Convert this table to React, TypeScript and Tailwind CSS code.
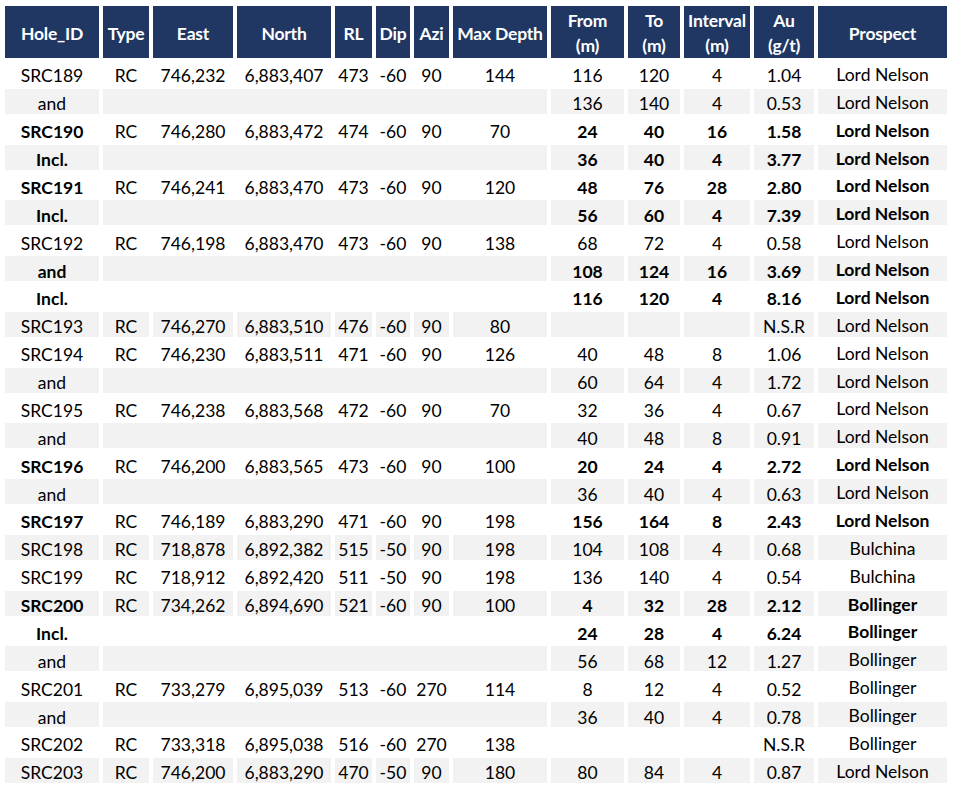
import React from 'react';

type Row = {
    hole: string;
    type?: string;
    east?: string;
    north?: string;
    rl?: string;
    dip?: string;
    azi?: string;
    depth?: string;
    from: string;
    to: string;
    interval: string;
    au: string;
    prospect: string;
    boldHole?: boolean;
    boldRes?: boolean;
};

const ROWS: Row[] = [
    { hole: 'SRC189', type: 'RC', east: '746,232', north: '6,883,407', rl: '473', dip: '-60', azi: '90', depth: '144', from: '116', to: '120', interval: '4', au: '1.04', prospect: 'Lord Nelson' },
    { hole: 'and', from: '136', to: '140', interval: '4', au: '0.53', prospect: 'Lord Nelson' },
    { hole: 'SRC190', type: 'RC', east: '746,280', north: '6,883,472', rl: '474', dip: '-60', azi: '90', depth: '70', from: '24', to: '40', interval: '16', au: '1.58', prospect: 'Lord Nelson', boldHole: true, boldRes: true },
    { hole: 'Incl.', from: '36', to: '40', interval: '4', au: '3.77', prospect: 'Lord Nelson', boldHole: true, boldRes: true },
    { hole: 'SRC191', type: 'RC', east: '746,241', north: '6,883,470', rl: '473', dip: '-60', azi: '90', depth: '120', from: '48', to: '76', interval: '28', au: '2.80', prospect: 'Lord Nelson', boldHole: true, boldRes: true },
    { hole: 'Incl.', from: '56', to: '60', interval: '4', au: '7.39', prospect: 'Lord Nelson', boldHole: true, boldRes: true },
    { hole: 'SRC192', type: 'RC', east: '746,198', north: '6,883,470', rl: '473', dip: '-60', azi: '90', depth: '138', from: '68', to: '72', interval: '4', au: '0.58', prospect: 'Lord Nelson' },
    { hole: 'and', from: '108', to: '124', interval: '16', au: '3.69', prospect: 'Lord Nelson', boldHole: true, boldRes: true },
    { hole: 'Incl.', from: '116', to: '120', interval: '4', au: '8.16', prospect: 'Lord Nelson', boldHole: true, boldRes: true },
    { hole: 'SRC193', type: 'RC', east: '746,270', north: '6,883,510', rl: '476', dip: '-60', azi: '90', depth: '80', from: '', to: '', interval: '', au: 'N.S.R', prospect: 'Lord Nelson' },
    { hole: 'SRC194', type: 'RC', east: '746,230', north: '6,883,511', rl: '471', dip: '-60', azi: '90', depth: '126', from: '40', to: '48', interval: '8', au: '1.06', prospect: 'Lord Nelson' },
    { hole: 'and', from: '60', to: '64', interval: '4', au: '1.72', prospect: 'Lord Nelson' },
    { hole: 'SRC195', type: 'RC', east: '746,238', north: '6,883,568', rl: '472', dip: '-60', azi: '90', depth: '70', from: '32', to: '36', interval: '4', au: '0.67', prospect: 'Lord Nelson' },
    { hole: 'and', from: '40', to: '48', interval: '8', au: '0.91', prospect: 'Lord Nelson' },
    { hole: 'SRC196', type: 'RC', east: '746,200', north: '6,883,565', rl: '473', dip: '-60', azi: '90', depth: '100', from: '20', to: '24', interval: '4', au: '2.72', prospect: 'Lord Nelson', boldHole: true, boldRes: true },
    { hole: 'and', from: '36', to: '40', interval: '4', au: '0.63', prospect: 'Lord Nelson' },
    { hole: 'SRC197', type: 'RC', east: '746,189', north: '6,883,290', rl: '471', dip: '-60', azi: '90', depth: '198', from: '156', to: '164', interval: '8', au: '2.43', prospect: 'Lord Nelson', boldHole: true, boldRes: true },
    { hole: 'SRC198', type: 'RC', east: '718,878', north: '6,892,382', rl: '515', dip: '-50', azi: '90', depth: '198', from: '104', to: '108', interval: '4', au: '0.68', prospect: 'Bulchina' },
    { hole: 'SRC199', type: 'RC', east: '718,912', north: '6,892,420', rl: '511', dip: '-50', azi: '90', depth: '198', from: '136', to: '140', interval: '4', au: '0.54', prospect: 'Bulchina' },
    { hole: 'SRC200', type: 'RC', east: '734,262', north: '6,894,690', rl: '521', dip: '-60', azi: '90', depth: '100', from: '4', to: '32', interval: '28', au: '2.12', prospect: 'Bollinger', boldHole: true, boldRes: true },
    { hole: 'Incl.', from: '24', to: '28', interval: '4', au: '6.24', prospect: 'Bollinger', boldHole: true, boldRes: true },
    { hole: 'and', from: '56', to: '68', interval: '12', au: '1.27', prospect: 'Bollinger' },
    { hole: 'SRC201', type: 'RC', east: '733,279', north: '6,895,039', rl: '513', dip: '-60', azi: '270', depth: '114', from: '8', to: '12', interval: '4', au: '0.52', prospect: 'Bollinger' },
    { hole: 'and', from: '36', to: '40', interval: '4', au: '0.78', prospect: 'Bollinger' },
    { hole: 'SRC202', type: 'RC', east: '733,318', north: '6,895,038', rl: '516', dip: '-60', azi: '270', depth: '138', from: '', to: '', interval: '', au: 'N.S.R', prospect: 'Bollinger' },
    { hole: 'SRC203', type: 'RC', east: '746,200', north: '6,883,290', rl: '470', dip: '-50', azi: '90', depth: '180', from: '80', to: '84', interval: '4', au: '0.87', prospect: 'Lord Nelson' },
];

const HEADERS: string[][] = [
    ['Hole_ID'],
    ['Type'],
    ['East'],
    ['North'],
    ['RL'],
    ['Dip'],
    ['Azi'],
    ['Max Depth'],
    ['From', '(m)'],
    ['To', '(m)'],
    ['Interval', '(m)'],
    ['Au', '(g/t)'],
    ['Prospect'],
];

const Cell = ({
    children,
    shade,
    bold,
    className = 'pt-[6px]',
}: {
    children?: React.ReactNode;
    shade: boolean;
    bold?: boolean;
    className?: string;
}) => (
    <div
        className={`flex items-center justify-center whitespace-nowrap ${shade ? 'bg-[#f2f2f2]' : ''} ${
            bold ? 'font-bold' : 'font-normal'
        } ${className}`}
    >
        {children}
    </div>
);

const DrillTable = () => {
    return (
        <div className="min-h-screen bg-white pl-[5px] pt-[6px] font-['Lato',sans-serif] text-[17.5px] leading-[22px] text-black">
            <div className="grid grid-cols-[94px_46px_80px_94px_37px_34px_35px_94px_73px_52px_66px_60px_129px] grid-rows-[52px] auto-rows-[24.875px] gap-x-[4px] gap-y-[3px]">
                {HEADERS.map((lines) => (
                    <div
                        key={lines[0]}
                        className="flex flex-col items-center justify-center whitespace-nowrap bg-[#203764] pt-[2px] text-[17.5px] font-bold leading-[25px] tracking-[-0.2px] text-white"
                    >
                        {lines.map((l) => (
                            <span key={l}>{l}</span>
                        ))}
                    </div>
                ))}

                {ROWS.map((r, i) => {
                    const shade = i % 2 === 1;
                    const sub = !r.type;
                    return (
                        <React.Fragment key={`${r.hole}-${i}`}>
                            <Cell shade={shade} bold={r.boldHole}>{r.hole}</Cell>
                            {sub ? (
                                <Cell shade={shade} className="col-span-7" />
                            ) : (
                                <>
                                    <Cell shade={shade}>{r.type}</Cell>
                                    <Cell shade={shade}>{r.east}</Cell>
                                    <Cell shade={shade}>{r.north}</Cell>
                                    <Cell shade={shade}>{r.rl}</Cell>
                                    <Cell shade={shade}>{r.dip}</Cell>
                                    <Cell shade={shade}>{r.azi}</Cell>
                                    <Cell shade={shade}>{r.depth}</Cell>
                                </>
                            )}
                            <Cell shade={shade} bold={r.boldRes}>{r.from}</Cell>
                            <Cell shade={shade} bold={r.boldRes}>{r.to}</Cell>
                            <Cell shade={shade} bold={r.boldRes}>{r.interval}</Cell>
                            <Cell shade={shade} bold={r.boldRes}>{r.au}</Cell>
                            <Cell shade={shade} bold={r.boldRes} className="pt-[3px]">
                                {r.prospect}
                            </Cell>
                        </React.Fragment>
                    );
                })}
            </div>
        </div>
    );
};

export default function App() {
    return <DrillTable />;
}
